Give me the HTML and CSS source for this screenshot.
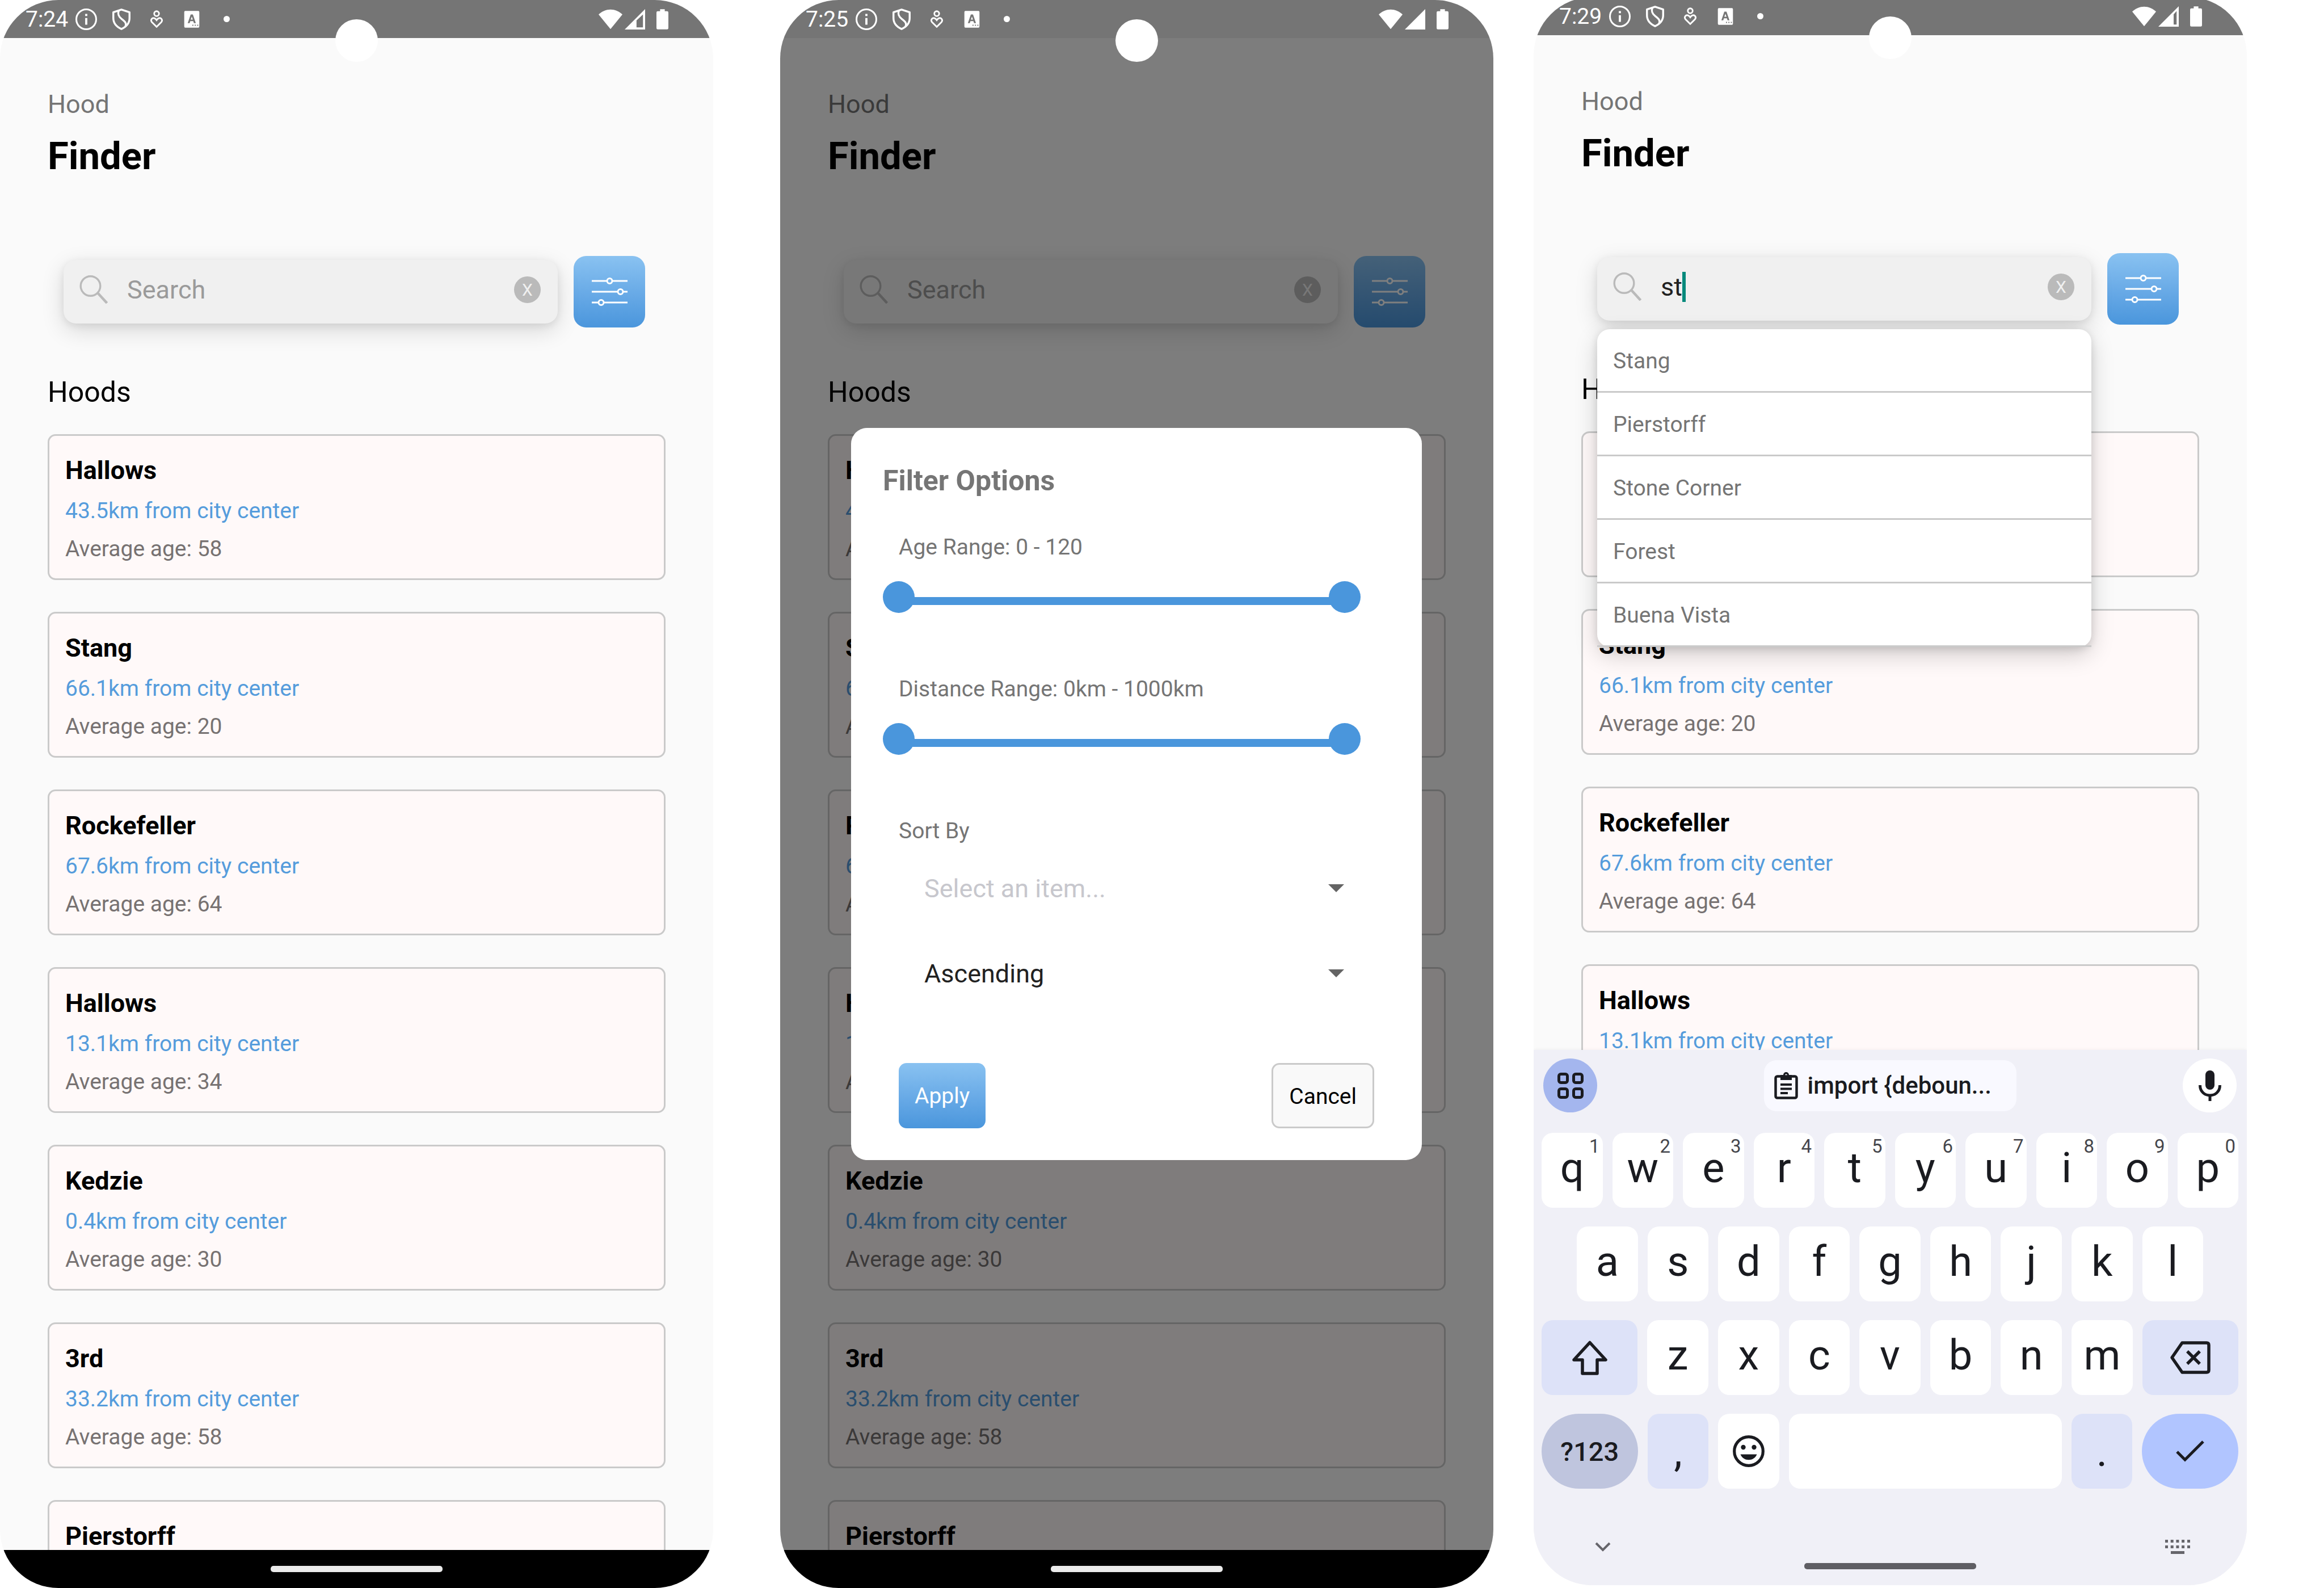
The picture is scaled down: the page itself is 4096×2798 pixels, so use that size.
FILE: index.html
```html
<!DOCTYPE html>
<html lang="en">
<head>
<meta charset="utf-8">
<title>Hood Finder</title>
<link rel="stylesheet" href="styles.css">
</head>
<body>
<svg class="sprite" aria-hidden="true">
  <symbol id="i-info" viewBox="0 0 40 40"><circle cx="20" cy="20" r="18.4" fill="none" stroke="currentColor" stroke-width="3.2"/><path d="M18 10h4v4h-4zM18 17.500h4V30h-4z"/></symbol>
  <symbol id="i-shield" viewBox="0 0 40 40"><g fill="none" stroke="currentColor" stroke-width="3.600" stroke-linejoin="round"><path d="M20 2 35 7v11c0 9-6 16-15 20C11 34 5 27 5 18V7z"/><path d="M15 4c-2 6-1 10 5 15 8 6 10 9 7 15"/></g></symbol>
  <symbol id="i-heart" viewBox="0 0 40 40"><g fill="none" stroke="currentColor" stroke-width="3"><circle cx="20" cy="9.500" r="4.500"/><path d="M20 34 11 25c-3-4 1-8.500 5-7 2 .8 3 2 4 3.500 1-1.500 2-2.700 4-3.500 4-1.500 8 3 5 7z"/></g></symbol>
  <symbol id="i-lang" viewBox="0 0 40 40"><path fill-rule="evenodd" d="M8 4.500h24a2 2 0 0 1 2 2v27a2 2 0 0 1-2 2H8a2 2 0 0 1-2-2v-27a2 2 0 0 1 2-2zM18 11 12.500 27H16l1.200-3.500h5.600L24 27h3.500L22 11zm2 4 2 5.500h-4zM21 30v2h2v-2zm4.500 0v2h2v-2zm4.500 0v2h2v-2z"/></symbol>
  <symbol id="i-wifi" viewBox="0 0 45 38"><path d="M22.500 37.500 0 10C13-2.500 32-2.500 45 10z"/></symbol>
  <symbol id="i-signal" viewBox="0 0 38 38"><path d="M38 0v38H0z"/></symbol>
  <symbol id="i-signal-mid" viewBox="0 0 38 38"><path fill-rule="evenodd" d="M38 0v38H0zM34 10 22 21v13h12z"/></symbol>
  <symbol id="i-signal-high" viewBox="0 0 38 38"><path fill-rule="evenodd" d="M38 0v38H0zM34 9 28.500 15v19H34z"/></symbol>
  <symbol id="i-battery" viewBox="0 0 23 39"><path d="M7 0h9v4h4.500A2.500 2.500 0 0 1 23 6.500v30a2.500 2.500 0 0 1-2.500 2.500h-18A2.500 2.500 0 0 1 0 36.500v-30A2.500 2.500 0 0 1 2.500 4H7z"/></symbol>
  <symbol id="i-search" viewBox="0 0 50 50"><g fill="none" stroke="currentColor"><circle cx="19.500" cy="19" r="17.300" stroke-width="3.400"/><path d="m32 31 16.500 18" stroke-width="4.500"/></g></symbol>
  <symbol id="i-sliders" viewBox="0 0 63 50"><g fill="none" stroke="currentColor" stroke-width="3"><path d="M0 6h26M37 6h26M0 25h45M56 25h7M0 44h11M22 44h41"/><circle cx="31.500" cy="6" r="4.500"/><circle cx="50.500" cy="25" r="4.500"/><circle cx="16.500" cy="44" r="4.500"/></g></symbol>
  <symbol id="i-caret" viewBox="0 0 28 14"><path d="M0 0h28L14 14z"/></symbol>
  <symbol id="i-apps" viewBox="0 0 46 46"><g fill="none" stroke="currentColor" stroke-width="5"><rect x="2.500" y="2.500" width="15" height="15" rx="3.500"/><rect x="28.500" y="2.500" width="15" height="15" rx="3.500"/><rect x="2.500" y="28.500" width="15" height="15" rx="3.500"/><rect x="28.500" y="28.500" width="15" height="15" rx="3.500"/></g></symbol>
  <symbol id="i-clip" viewBox="0 0 42 48"><rect x="2.500" y="7.500" width="37" height="38" rx="3" fill="none" stroke="currentColor" stroke-width="4.500"/><path fill-rule="evenodd" d="M11 5h5a5 5 0 0 1 10 0h5v9H11zm10-1.500a2 2 0 1 0 .1 0z"/><path d="M11 20h20v4H11zM11 27.500h20v4H11zM11 35h13v4H11z"/></symbol>
  <symbol id="i-mic" viewBox="0 0 40 54"><rect x="12" y="0" width="16" height="34" rx="8"/><path d="M2.500 26c0 24 35 24 35 0M20 43v11" fill="none" stroke="currentColor" stroke-width="5"/></symbol>
  <symbol id="i-shift" viewBox="0 0 64 62"><path d="M32 4.500 60 35H45v24H19V35H4z" fill="none" stroke="currentColor" stroke-width="5.500" stroke-linejoin="round"/></symbol>
  <symbol id="i-back" viewBox="0 0 72 58"><g fill="none" stroke="currentColor" stroke-width="5.500" stroke-linejoin="round"><path d="M22 3h43q4 0 4 4v44q0 4-4 4H22L4 29z"/><path d="m31 18 22 22M53 18 31 40"/></g></symbol>
  <symbol id="i-smile" viewBox="0 0 56 56"><circle cx="28" cy="28" r="25.300" fill="none" stroke="currentColor" stroke-width="5.200"/><circle cx="18.500" cy="21" r="4.200"/><circle cx="37.500" cy="21" r="4.200"/><path d="M13.500 33.500h29c-5 13-24 13-29 0z"/></symbol>
  <symbol id="i-check" viewBox="0 0 50 38"><path d="m2 20 14 14L48 2" fill="none" stroke="currentColor" stroke-width="5"/></symbol>
  <symbol id="i-down" viewBox="0 0 28 18"><path d="m2 2 12 12L26 2" fill="none" stroke="currentColor" stroke-width="4"/></symbol>
  <symbol id="i-board" viewBox="0 0 44 26"><path d="M0 0h5v5H0zm9.700 0h5v5h-5zm9.700 0h5v5h-5zm9.700 0h5v5h-5zM39 0h5v5h-5zM0 10h5v5H0zm9.700 0h5v5h-5zm9.700 0h5v5h-5zm9.700 0h5v5h-5zM39 10h5v5h-5zM10 20h24v5H10z"/></symbol>
</svg>

<main class="stage">
  <section class="phone">
    <div class="status">
      <span class="time">7:24</span>
      <div class="notes"><svg><use href="#i-info"/></svg><svg><use href="#i-shield"/></svg><svg><use href="#i-heart"/></svg><svg><use href="#i-lang"/></svg><i class="dot"></i></div>
      <svg class="wifi"><use href="#i-wifi"/></svg><svg class="signal"><use href="#i-signal-mid"/></svg><svg class="battery"><use href="#i-battery"/></svg>
    </div>
    <i class="camera"></i>
    <div class="app">
      <header><p class="kicker">Hood</p><h1>Finder</h1></header>
      <form class="search-row">
        <div class="search">
          <svg class="glass"><use href="#i-search"/></svg>
          <div class="entry"><input type="text" placeholder="Search" aria-label="Search hoods"></div>
          <button type="button" class="clear">X</button>
        </div>
        <button type="button" class="filter" aria-label="Filter"><svg><use href="#i-sliders"/></svg></button>
      </form>
      <h2>Hoods</h2>
      <ul class="cards">
        <li class="card"><h3>Hallows</h3><p class="far">43.5km from city center</p><p class="age">Average age: 58</p></li>
        <li class="card"><h3>Stang</h3><p class="far">66.1km from city center</p><p class="age">Average age: 20</p></li>
        <li class="card"><h3>Rockefeller</h3><p class="far">67.6km from city center</p><p class="age">Average age: 64</p></li>
        <li class="card"><h3>Hallows</h3><p class="far">13.1km from city center</p><p class="age">Average age: 34</p></li>
        <li class="card"><h3>Kedzie</h3><p class="far">0.4km from city center</p><p class="age">Average age: 30</p></li>
        <li class="card"><h3>3rd</h3><p class="far">33.2km from city center</p><p class="age">Average age: 58</p></li>
        <li class="card"><h3>Pierstorff</h3></li>
      </ul>
    </div>
    <div class="nav"><i class="pill"></i></div>
  </section>

  <section class="phone">
    <div class="status">
      <span class="time">7:25</span>
      <div class="notes"><svg><use href="#i-info"/></svg><svg><use href="#i-shield"/></svg><svg><use href="#i-heart"/></svg><svg><use href="#i-lang"/></svg><i class="dot"></i></div>
      <svg class="wifi"><use href="#i-wifi"/></svg><svg class="signal"><use href="#i-signal"/></svg><svg class="battery"><use href="#i-battery"/></svg>
    </div>
    <i class="camera"></i>
    <div class="app">
      <header><p class="kicker">Hood</p><h1>Finder</h1></header>
      <form class="search-row">
        <div class="search">
          <svg class="glass"><use href="#i-search"/></svg>
          <div class="entry"><input type="text" placeholder="Search" aria-label="Search hoods"></div>
          <button type="button" class="clear">X</button>
        </div>
        <button type="button" class="filter" aria-label="Filter"><svg><use href="#i-sliders"/></svg></button>
      </form>
      <h2>Hoods</h2>
      <ul class="cards">
        <li class="card"><h3>Hallows</h3><p class="far">43.5km from city center</p><p class="age">Average age: 58</p></li>
        <li class="card"><h3>Stang</h3><p class="far">66.1km from city center</p><p class="age">Average age: 20</p></li>
        <li class="card"><h3>Rockefeller</h3><p class="far">67.6km from city center</p><p class="age">Average age: 64</p></li>
        <li class="card"><h3>Hallows</h3><p class="far">13.1km from city center</p><p class="age">Average age: 34</p></li>
        <li class="card"><h3>Kedzie</h3><p class="far">0.4km from city center</p><p class="age">Average age: 30</p></li>
        <li class="card"><h3>3rd</h3><p class="far">33.2km from city center</p><p class="age">Average age: 58</p></li>
        <li class="card"><h3>Pierstorff</h3></li>
      </ul>
      <div class="scrim">
        <form class="modal" role="dialog" aria-labelledby="modal-title">
          <h2 id="modal-title">Filter Options</h2>
          <label class="field" for="age-min">Age Range: 0 - 120</label>
          <div class="range">
            <input type="range" id="age-min" min="0" max="120" value="0">
            <input type="range" min="0" max="120" value="120" aria-label="Maximum age">
          </div>
          <label class="field" for="far-min">Distance Range: 0km - 1000km</label>
          <div class="range">
            <input type="range" id="far-min" min="0" max="1000" value="0">
            <input type="range" min="0" max="1000" value="1000" aria-label="Maximum distance">
          </div>
          <label class="field" for="sort">Sort By</label>
          <div class="pickers">
            <div class="picker"><select id="sort" class="empty"><option>Select an item...</option></select><svg><use href="#i-caret"/></svg></div>
            <div class="picker"><select aria-label="Sort direction"><option>Ascending</option></select><svg><use href="#i-caret"/></svg></div>
          </div>
          <div class="actions"><button type="button" class="apply">Apply</button><button type="button" class="cancel">Cancel</button></div>
        </form>
      </div>
    </div>
    <div class="nav"><i class="pill"></i></div>
  </section>

  <section class="phone raised">
    <div class="status">
      <span class="time">7:29</span>
      <div class="notes"><svg><use href="#i-info"/></svg><svg><use href="#i-shield"/></svg><svg><use href="#i-heart"/></svg><svg><use href="#i-lang"/></svg><i class="dot"></i></div>
      <svg class="wifi"><use href="#i-wifi"/></svg><svg class="signal"><use href="#i-signal-high"/></svg><svg class="battery"><use href="#i-battery"/></svg>
    </div>
    <i class="camera"></i>
    <div class="app">
      <header><p class="kicker">Hood</p><h1>Finder</h1></header>
      <form class="search-row">
        <div class="search">
          <svg class="glass"><use href="#i-search"/></svg>
          <div class="entry"><input type="text" value="st" aria-label="Search hoods"><i class="cursor"></i></div>
          <button type="button" class="clear">X</button>
          <ul class="suggest"><li>Stang</li><li>Pierstorff</li><li>Stone Corner</li><li>Forest</li><li>Buena Vista</li></ul>
        </div>
        <button type="button" class="filter" aria-label="Filter"><svg><use href="#i-sliders"/></svg></button>
      </form>
      <h2>Hoods</h2>
      <ul class="cards">
        <li class="card"><h3>Hallows</h3><p class="far">43.5km from city center</p><p class="age">Average age: 58</p></li>
        <li class="card"><h3>Stang</h3><p class="far">66.1km from city center</p><p class="age">Average age: 20</p></li>
        <li class="card"><h3>Rockefeller</h3><p class="far">67.6km from city center</p><p class="age">Average age: 64</p></li>
        <li class="card"><h3>Hallows</h3><p class="far">13.1km from city center</p></li>
      </ul>
    </div>
    <div class="keyboard">
      <div class="strip">
        <button class="round tools" aria-label="Tools"><svg width="46" height="46"><use href="#i-apps"/></svg></button>
        <button class="chip"><svg width="42" height="48"><use href="#i-clip"/></svg>import {deboun...</button>
        <button class="round mic" aria-label="Voice input"><svg width="40" height="54"><use href="#i-mic"/></svg></button>
      </div>
      <div class="keys">
        <div class="row"><button>q<sup>1</sup></button><button>w<sup>2</sup></button><button>e<sup>3</sup></button><button>r<sup>4</sup></button><button>t<sup>5</sup></button><button>y<sup>6</sup></button><button>u<sup>7</sup></button><button>i<sup>8</sup></button><button>o<sup>9</sup></button><button>p<sup>0</sup></button></div>
        <div class="row inset"><button>a</button><button>s</button><button>d</button><button>f</button><button>g</button><button>h</button><button>j</button><button>k</button><button>l</button></div>
        <div class="row"><button class="wide soft" aria-label="Shift"><svg width="64" height="62"><use href="#i-shift"/></svg></button><button>z</button><button>x</button><button>c</button><button>v</button><button>b</button><button>n</button><button>m</button><button class="wide soft" aria-label="Backspace"><svg width="72" height="58"><use href="#i-back"/></svg></button></div>
        <div class="row"><button class="wide symbols">?123</button><button class="soft mark">,</button><button class="mark" aria-label="Emoji"><svg width="56" height="56"><use href="#i-smile"/></svg></button><button class="space" aria-label="Space"></button><button class="soft mark">.</button><button class="wide enter" aria-label="Done"><svg width="50" height="38"><use href="#i-check"/></svg></button></div>
      </div>
      <div class="foot"><svg width="28" height="18"><use href="#i-down"/></svg><svg width="44" height="26"><use href="#i-board"/></svg></div>
      <i class="pill"></i>
    </div>
  </section>
</main>
</body>
</html>
```

FILE: styles.css
```css
* { box-sizing: border-box; margin: 0; padding: 0; }
body { background: #fff; font-family: Roboto, sans-serif; font-size: 39px; line-height: 46px; color: #757575; overflow: hidden; }
button, input, select { font: inherit; border: 0; background: none; color: inherit; outline: 0; }
ul { list-style: none; }
svg { display: block; fill: currentColor; flex: none; }
.sprite { position: absolute; width: 0; height: 0; }

/* three handsets side by side */
.stage { display: grid; grid-template-columns: 1257fr 118fr 1257fr 71fr 1257fr 136fr; height: 100vh; }
.phone { position: relative; grid-column: 1; grid-row: 1; display: flex; flex-direction: column; height: 100vh; overflow: hidden; border-radius: 103px; background: #fafafa; }
.phone:nth-child(2) { grid-column: 3; }
.phone:nth-child(3) { grid-column: 5; }
.raised { margin-top: -5px; }
.camera { position: absolute; z-index: 2; top: 34px; left: 50%; width: 75px; height: 75px; margin-left: -38px; border-radius: 50%; background: #fff; }

.status { display: flex; align-items: center; flex: none; height: 67px; padding: 0 79px 0 45px; background: #757575; color: #fff; }
.time { margin-right: 13px; }
.notes { display: flex; align-items: center; gap: 24px; margin-right: auto; }
.notes svg { width: 38px; height: 38px; }
.dot { width: 11px; height: 11px; margin-left: 13px; border-radius: 50%; background: #fff; }
.wifi { width: 42px; height: 36px; }
.signal { width: 36px; height: 36px; margin: 0 20px 0 4px; }
.battery { width: 21px; height: 36px; }

.app { position: relative; flex: 1; min-height: 0; overflow: hidden; padding: 90px 84px 0; }
.kicker { font-size: 45px; line-height: 53px; }
h1 { margin-top: 26px; font-size: 67px; line-height: 79px; color: #000; }
.search-row { display: flex; align-items: center; gap: 28px; margin-top: 136px; padding: 0 36px 0 28px; }
.search { position: relative; flex: 1; display: flex; align-items: center; height: 112px; padding: 0 30px 8px 28px; border-radius: 22px; background: #f0f0f0; box-shadow: 0 12px 40px rgba(0, 0, 0, .14), 0 4px 14px rgba(0, 0, 0, .08); }
.glass { width: 50px; height: 50px; color: #bababa; }
.entry { position: relative; flex: 1; margin-left: 34px; font-size: 45px; line-height: 53px; color: #212121; }
.entry input { display: block; width: 100%; height: 53px; }
.entry input::placeholder { color: #9a9a9a; opacity: 1; }
.cursor { position: absolute; top: 0; left: 38px; width: 6px; height: 53px; background: #00897b; }
.clear { width: 47px; height: 47px; border-radius: 50%; background: #bababa; color: #f0f0f0; font-size: 30px; line-height: 47px; text-align: center; }
.filter { display: grid; place-items: center; width: 126px; height: 126px; border-radius: 22px; background: linear-gradient(#89c2f1, #67a9e6 55%, #4a96dc); color: #fff; }
.filter svg { width: 63px; height: 50px; }
.app > h2 { margin-top: 85px; font-size: 50px; line-height: 59px; font-weight: 400; color: #000; }
.cards { display: grid; gap: 56px; margin-top: 44px; }
.card { min-height: 257px; padding: 34px 28px 29px; border: 3px solid #cacaca; border-radius: 14px; background: #fff9f9; }
.card h3 { font-size: 45px; line-height: 53px; color: #000; }
.far { margin-top: 22px; color: #559cdc; }
.age { margin-top: 21px; color: #777272; }

.suggest { position: absolute; z-index: 1; top: 127px; left: 0; right: 0; border-radius: 22px; background: #fff; box-shadow: 0 14px 40px rgba(0, 0, 0, .18), 0 4px 14px rgba(0, 0, 0, .12); }
.suggest li { padding: 33px 28px 30px; border-bottom: 3px solid #cacaca; }

.scrim { position: absolute; inset: 0; z-index: 1; display: flex; align-items: center; padding: 0 126px 0 125px; background: rgba(0, 0, 0, .5); }
.modal { flex: 1; padding: 64px 56px 56px; border-radius: 28px; background: #fff; }
.modal h2 { font-size: 50px; line-height: 59px; margin-bottom: 64px; }
.field { display: block; margin-left: 28px; }
.range { display: grid; margin: 37px 52px 111px 0; background: linear-gradient(#4a96dc, #4a96dc) no-repeat 28px 28px / calc(100% - 56px) 14px; }
.range input { grid-area: 1 / 1; width: 100%; height: 56px; appearance: none; pointer-events: none; }
.range input::-webkit-slider-thumb { appearance: none; width: 56px; height: 56px; border-radius: 50%; background: #4a96dc; pointer-events: auto; }
.pickers { display: grid; gap: 10px; margin: 8px 28px 88px; }
.picker { display: grid; align-items: center; font-size: 45px; line-height: 53px; color: #212121; }
.picker select { grid-area: 1 / 1; width: 100%; height: 140px; padding: 0 100px 0 45px; appearance: none; }
.picker .empty { color: #c7c7cd; }
.picker svg { grid-area: 1 / 1; justify-self: end; width: 28px; height: 14px; margin-right: 53px; color: #646464; pointer-events: none; }
.actions { display: flex; justify-content: space-between; margin: 0 28px; }
.actions button { height: 115px; padding: 0 28px; border-radius: 14px; }
.apply { background: linear-gradient(#89c2f1, #67a9e6 55%, #4a96dc); color: #fff; }
.actions .cancel { padding-top: 3px; border: 3px solid #cacaca; background: #f9f9f9; color: #000; }

.nav { flex: none; height: 67px; padding-top: 28px; background: #000; color: #ebebeb; }
.pill { display: block; width: 303px; height: 11px; margin: 0 auto; border-radius: 5px; background: currentColor; }

.keyboard { flex: none; padding: 15px 15px 28px 14px; background: #f0f0f7; color: #1a1b20; box-shadow: 0 0 6px rgba(0, 0, 0, .06); z-index: 1; }
.strip { display: flex; align-items: center; justify-content: space-between; padding: 0 3px; }
.round { display: grid; place-items: center; width: 95px; height: 95px; border-radius: 50%; }
.tools { background: #a4b6ee; }
.mic { background: #fff; }
.chip { display: flex; align-items: center; gap: 17px; width: 445px; height: 90px; padding-left: 18px; border-radius: 22px; background: #f9f9ff; font-size: 42px; font-weight: 500; }
.keys { display: grid; gap: 33px; margin-top: 36px; }
.row { display: flex; gap: 17px; }
.inset { padding: 0 62px; }
.row button { position: relative; display: flex; align-items: center; justify-content: center; flex: 108 1 0; height: 132px; padding-bottom: 10px; border-radius: 20px; background: #fff; font-size: 74px; line-height: 87px; }
.row sup { position: absolute; top: 5px; right: 5px; font-size: 33px; line-height: 38px; color: #45464c; }
.row .wide { flex-grow: 170; padding: 0; }
.row .mark { padding: 0; }
.row .space { flex-grow: 482; }
.row .soft { background: #dde2f8; }
.row .symbols { border-radius: 66px; background: #bfc5de; font-size: 47px; font-weight: 500; }
.row .enter { border-radius: 66px; background: #b1c5ff; }
.foot { display: flex; align-items: center; justify-content: space-between; height: 36px; margin: 85px 85px 10px 94px; color: #66656b; }
.keyboard > .pill { color: #5f5e64; }
```
